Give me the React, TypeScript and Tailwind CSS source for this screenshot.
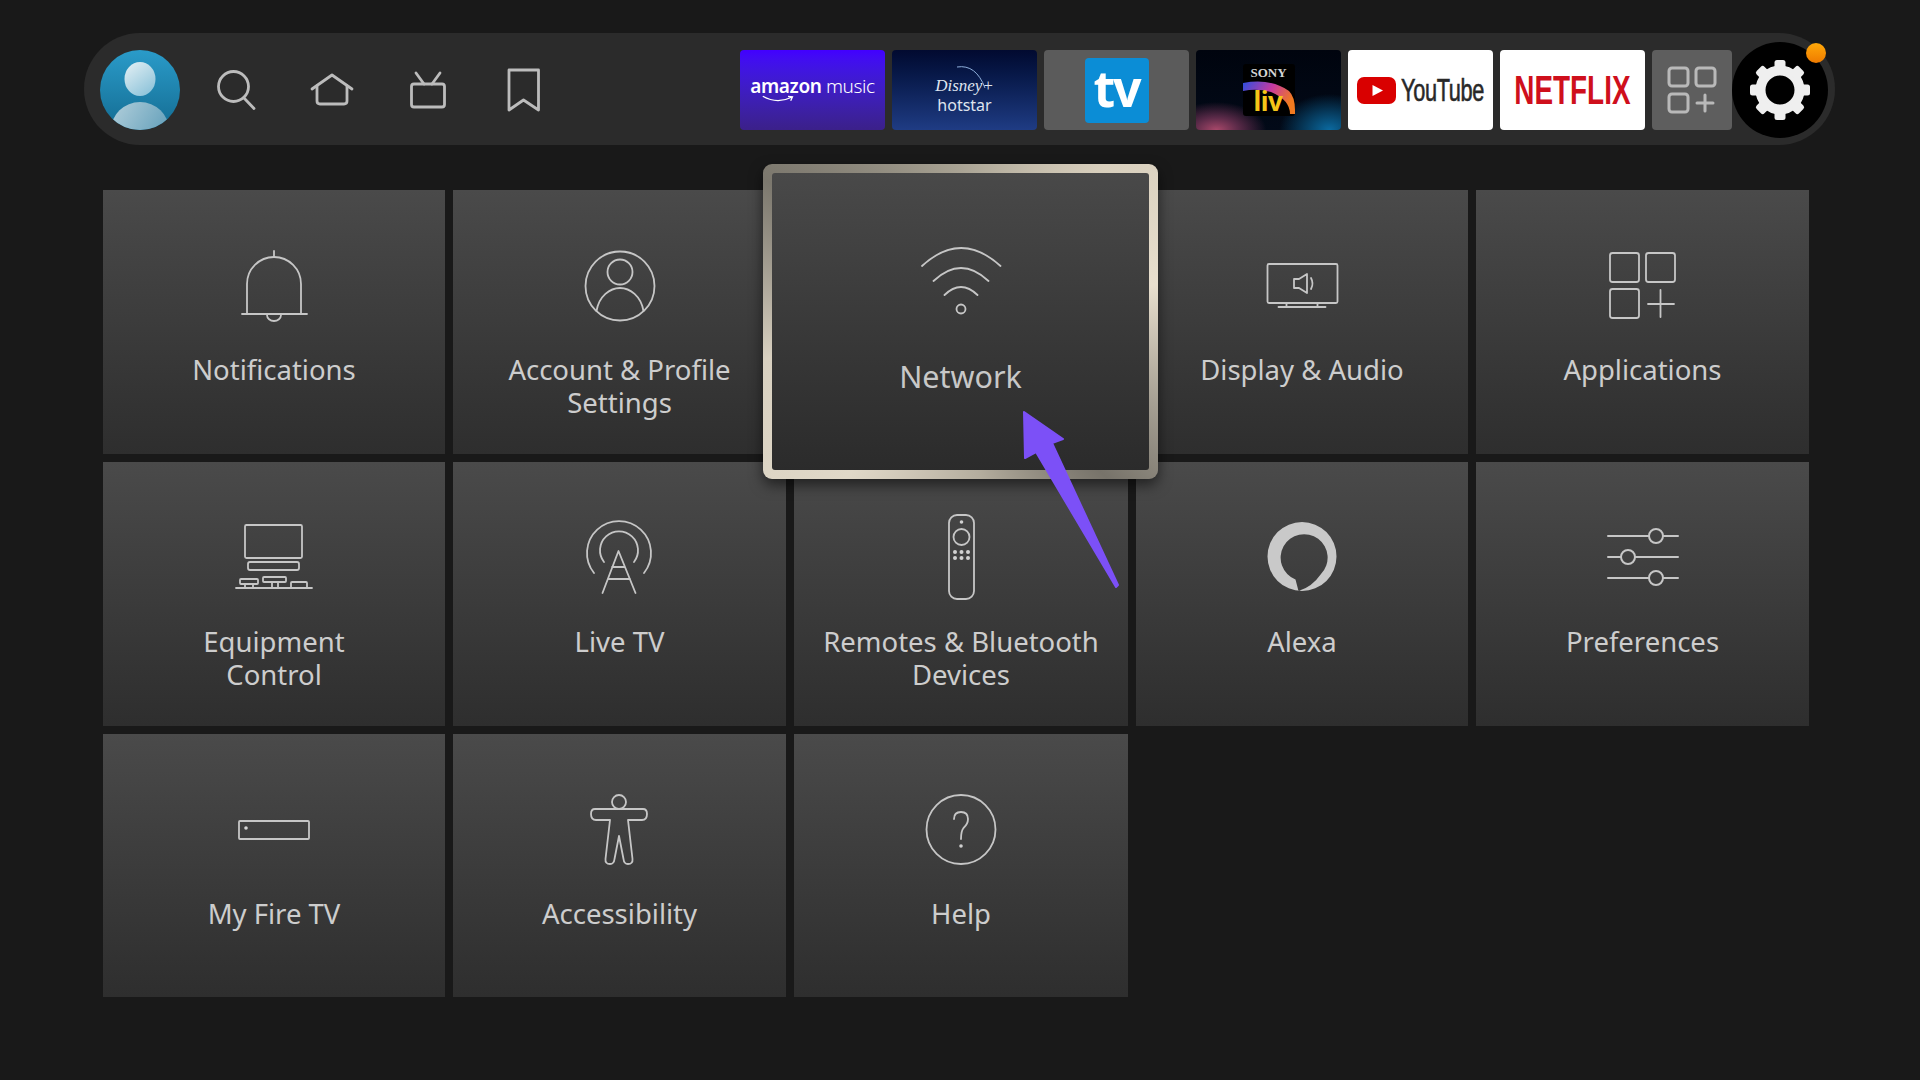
import type { ReactNode } from 'react';

const FONT = "font-['Noto_Sans','Open_Sans',sans-serif]";

function Line({ children, w = 1.8 }: { children: ReactNode; w?: number }) {
  return (
    <svg
      viewBox="0 0 90 90"
      fill="none"
      stroke="#c6c6c6"
      strokeWidth={w}
      strokeLinecap="round"
      strokeLinejoin="round"
      className="h-[90px] w-[90px] overflow-visible"
    >
      {children}
    </svg>
  );
}

const BellIcon = () => (
  <Line>
    <path d="M18 74V44a27 27 0 0 1 54 0V74" />
    <path d="M13 74H78M45 11V17M38 75a7 6 0 0 0 14 0" />
  </Line>
);

const PersonIcon = () => (
  <Line>
    <circle cx="45" cy="46" r="34.5" />
    <circle cx="45" cy="32" r="12.5" />
    <path d="M21.5 71C24 56 35 48 45 48S66 56 68.5 71" />
  </Line>
);

const WifiIcon = () => (
  <Line>
    <path d="M6 28Q45 -8 84.5 28M17.5 43Q45 17 72.5 43M28.5 57Q45 41 61.5 57" />
    <circle cx="45" cy="71" r="4.5" />
  </Line>
);

const DisplayIcon = () => (
  <Line>
    <rect x="10.5" y="24" width="70" height="39" rx="1.5" />
    <path d="M21.5 67H68.5M29.5 63V67M60.5 63V67" />
    <path d="M37 39H42L50 34V53L42 48H37ZM54 38Q57 43.5 54 49" />
  </Line>
);

const AppsIcon = () => (
  <Line>
    <rect x="12" y="13" width="29" height="29" rx="2.5" />
    <rect x="48" y="13" width="29" height="29" rx="2.5" />
    <rect x="12" y="49" width="29" height="29" rx="2.5" />
    <path d="M50 64H76M62.5 50V77" />
  </Line>
);

const EquipmentIcon = () => (
  <Line>
    <rect x="16" y="13" width="57" height="33" rx="1.5" />
    <rect x="19" y="50" width="51" height="8" rx="2" />
    <path d="M7 76H83M16 72V76M24 72V76M43 70V76M49 70V76" />
    <rect x="11" y="67" width="18" height="5" rx="1" />
    <rect x="34" y="65" width="23" height="5" rx="1" />
    <rect x="62" y="70" width="16" height="6" rx="1" />
  </Line>
);

const TowerIcon = () => (
  <Line>
    <path d="M19 61A32 32 0 1 1 69 61" />
    <path d="M29 50A19 19 0 1 1 59 50" />
    <path d="M27.5 81L43.5 39L60.5 81M37 55H50M33 67H55" />
  </Line>
);

const RemoteIcon = () => (
  <Line>
    <rect x="33" y="3" width="25" height="84" rx="8" />
    <circle cx="45.5" cy="25" r="8" />
    <g fill="#d0d0d0" stroke="none">
      <circle cx="45.5" cy="10" r="1.8" />
      <circle cx="39" cy="40" r="2" />
      <circle cx="45.5" cy="40" r="2" />
      <circle cx="52" cy="40" r="2" />
      <circle cx="39" cy="46" r="2" />
      <circle cx="45.5" cy="46" r="2" />
      <circle cx="52" cy="46" r="2" />
    </g>
  </Line>
);

const AlexaIcon = () => (
  <svg viewBox="0 0 90 90" className="h-[90px] w-[90px]">
    <path
      fill="#c9c9c9"
      fillRule="evenodd"
      d="M45 10a34.5 34.5 0 1 0 0 69a34.5 34.5 0 1 0 0-69ZM41.5 79L38.5 67.5A23.5 23.5 0 1 1 64 62Q55 75 41.5 79Z"
    />
  </svg>
);

const SlidersIcon = () => (
  <Line w={2}>
    <path d="M10 24H51M65 24H80M10 45H23M37 45H80M10 66H51M65 66H80" />
    <circle cx="58" cy="24" r="7" />
    <circle cx="30" cy="45" r="7" />
    <circle cx="58" cy="66" r="7" />
  </Line>
);

const BoxIcon = () => (
  <Line>
    <rect x="10" y="37" width="70" height="18" rx="1" />
    <circle cx="17" cy="44" r="1.8" fill="#d6d6d6" stroke="none" />
  </Line>
);

const BodyIcon = () => (
  <Line>
    <circle cx="44" cy="18" r="7" />
    <path d="M20 25H68Q72 25 72 30Q72 36 67 36H53L57.5 75Q58 80 53 80Q49 80 48.5 75L44 52L39.5 75Q39 80 35 80Q30 80 30.5 75L35 36H21Q16 36 16 30Q16 25 20 25Z" />
  </Line>
);

const HelpIcon = () => (
  <Line>
    <circle cx="45" cy="45.5" r="34.5" />
    <path d="M38 35Q38 28 45 28Q52 28 52 35Q52 40 47.5 44Q45 47 45 55" />
    <circle cx="45" cy="62" r="1.8" fill="#d0d0d0" stroke="none" />
  </Line>
);

const NavIcon = ({ children }: { children: ReactNode }) => (
  <div className="flex w-[96px] items-center justify-center">
    <svg
      viewBox="0 0 50 50"
      fill="none"
      stroke="#bcbcbc"
      strokeWidth="2.8"
      strokeLinecap="round"
      strokeLinejoin="round"
      className="h-[50px] w-[50px]"
    >
      {children}
    </svg>
  </div>
);

function Avatar() {
  return (
    <svg viewBox="0 0 80 80" className="h-[80px] w-[80px] shrink-0">
      <defs>
        <linearGradient id="avBg" x1="0" y1="0" x2="0" y2="1">
          <stop offset="0" stopColor="#2a9bc9" />
          <stop offset="1" stopColor="#146c92" />
        </linearGradient>
        <linearGradient id="avHead" x1="0" y1="0" x2="0.7" y2="1">
          <stop offset="0" stopColor="#e6f1f5" />
          <stop offset="1" stopColor="#8fc4da" />
        </linearGradient>
        <linearGradient id="avBody" x1="0" y1="0" x2="1" y2="0.6">
          <stop offset="0" stopColor="#b4d0dc" />
          <stop offset="1" stopColor="#5f9db8" />
        </linearGradient>
        <clipPath id="avClip">
          <circle cx="40" cy="40" r="40" />
        </clipPath>
      </defs>
      <circle cx="40" cy="40" r="40" fill="url(#avBg)" />
      <ellipse cx="40" cy="29" rx="15.5" ry="17" fill="url(#avHead)" />
      <ellipse cx="40" cy="80" rx="29" ry="28" fill="url(#avBody)" clipPath="url(#avClip)" />
    </svg>
  );
}

function AmazonTile() {
  return (
    <div className="relative flex h-[80px] w-[145px] items-center justify-center rounded bg-gradient-to-b from-[#4200ff] to-[#3b2089] text-white">
      <span className="-mt-[8px] text-[19px] leading-none tracking-[-0.4px]">
        <span className="font-semibold">amazon</span> <span className="font-light">music</span>
      </span>
      <svg viewBox="0 0 40 10" fill="none" stroke="#ffffff" strokeWidth="1.4" className="absolute left-[21px] top-[44px] h-[10px] w-[36px]">
        <path d="M2 2Q18 11 34 3M30 2L35 2.5L33 7" />
      </svg>
    </div>
  );
}

function HotstarTile() {
  return (
    <div className="relative flex h-[80px] w-[145px] flex-col items-center justify-center rounded bg-gradient-to-b from-[#020a30] to-[#1f3c84] text-[#dfe4ef]">
      <svg viewBox="0 0 50 30" fill="none" stroke="#8fb0dc" strokeWidth="1" className="absolute left-[62px] top-[14px] h-[30px] w-[50px]">
        <path d="M3 3Q22 0 31 24" />
      </svg>
      <span className="mt-[12px] font-['Liberation_Serif',serif] text-[17px] italic leading-[18px]">Disney+</span>
      <span className="text-[16px] leading-[20px]">hotstar</span>
    </div>
  );
}

function TvTile() {
  return (
    <div className="flex h-[80px] w-[145px] items-center justify-center rounded bg-[#5b5b5b]">
      <div className="flex h-[65px] w-[64px] items-center justify-center rounded bg-[#0b8dd6] pb-[4px] text-[50px] font-bold leading-none tracking-[-2px] text-white">
        tv
      </div>
    </div>
  );
}

function SonyTile() {
  return (
    <div className="flex h-[80px] w-[145px] items-center justify-center rounded bg-[radial-gradient(ellipse_50px_28px_at_14%_100%,#a8486a_0%,#5a2a48_45%,transparent_100%),radial-gradient(ellipse_50px_36px_at_92%_100%,#0b6aa0_0%,#063a5c_50%,transparent_100%),linear-gradient(#00040e,#020a18)]">
      <div className="relative h-[52px] w-[52px] rounded-[3px] bg-black">
        <svg viewBox="0 0 52 52" className="absolute inset-0 h-full w-full">
          <defs>
            <linearGradient id="livGrad" x1="0" y1="0" x2="1" y2="0.4">
              <stop offset="0" stopColor="#2d4fe0" />
              <stop offset="0.55" stopColor="#c83aa0" />
              <stop offset="1" stopColor="#f07a20" />
            </linearGradient>
          </defs>
          <path d="M0 19Q28 14 46 27Q52 33 52 46L52 50H47Q47 36 28 28Q14 24 0 27Z" fill="url(#livGrad)" />
        </svg>
        <span className="absolute left-0 right-0 top-[2px] text-center font-['Liberation_Serif',serif] text-[13px] font-bold leading-[14px] text-[#d6d6d6]">
          SONY
        </span>
        <span className="absolute bottom-0 left-[11px] text-[26px] font-bold leading-[30px] tracking-[-0.5px] text-[#f5c518]">
          liv
        </span>
      </div>
    </div>
  );
}

function YoutubeTile() {
  return (
    <div className="flex h-[80px] w-[145px] items-center gap-[5px] rounded bg-white pl-[9px]">
      <svg viewBox="0 0 39 27" className="h-[27px] w-[39px] shrink-0">
        <rect width="39" height="27" rx="7" fill="#d90000" />
        <path d="M15.5 8L26 13.5L15.5 19Z" fill="#ffffff" />
      </svg>
      <div className="w-[79px]">
        <span className="inline-block origin-left scale-x-[0.68] font-['Liberation_Sans',sans-serif] text-[32px] leading-none tracking-[-0.5px] text-[#282828] [-webkit-text-stroke:0.6px_#282828]">
          YouTube
        </span>
      </div>
    </div>
  );
}

function NetflixTile() {
  return (
    <div className="flex h-[80px] w-[145px] items-center justify-center rounded bg-white">
      <span className="inline-block scale-x-[0.68] font-['Liberation_Sans',sans-serif] text-[41px] font-bold leading-none text-[#cf0f1c]">
        NETFLIX
      </span>
    </div>
  );
}

function AddAppsTile() {
  return (
    <div className="h-[80px] w-[80px] rounded bg-[#5e5e5e]">
      <svg viewBox="0 0 80 80" fill="none" stroke="#b9b9b9" strokeWidth="3" strokeLinecap="round" className="h-[80px] w-[80px]">
        <rect x="17" y="18" width="19" height="18" rx="3" />
        <rect x="44" y="18" width="19" height="18" rx="3" />
        <rect x="17" y="44" width="19" height="18" rx="3" />
        <path d="M45 53H61M53 45V61" />
      </svg>
    </div>
  );
}

function GearButton() {
  const teeth = [0, 45, 90, 135, 180, 225, 270, 315];
  return (
    <div className="relative flex h-[96px] w-[96px] shrink-0 items-center justify-center rounded-full bg-black">
      <svg viewBox="0 0 64 64" className="h-[64px] w-[64px]">
        <circle cx="32" cy="32" r="19.5" fill="none" stroke="#efefef" strokeWidth="10" />
        {teeth.map((a) => (
          <rect key={a} x="26.5" y="2" width="11" height="12" rx="2.5" fill="#efefef" transform={`rotate(${a} 32 32)`} />
        ))}
      </svg>
      <span className="absolute right-[2px] top-[1px] h-[20px] w-[20px] rounded-full bg-gradient-to-b from-[#ffa90a] to-[#ee7a00]" />
    </div>
  );
}

function Tile({ icon, label }: { icon: ReactNode; label: string }) {
  return (
    <div className="flex flex-col items-center bg-gradient-to-b from-[#4a4a4a] to-[#2e2e2e] pt-[50px]">
      <div className="flex h-[90px] w-[90px] items-center justify-center">{icon}</div>
      <p className="mt-[23px] whitespace-pre-line text-center text-[27.5px] leading-[33px] text-[#cdcdcd]">{label}</p>
    </div>
  );
}

function NetworkTile() {
  return (
    <div className="relative bg-[#3a3a3a]">
      <div className="absolute -bottom-[25px] -left-[31px] -right-[30px] -top-[26px] z-10 rounded-[9px] bg-[conic-gradient(from_0deg,#a9a394,#d8cfbd_12%,#e8dfce_22%,#77736a_38%,#b4ad9e_48%,#e0d8c8_60%,#d8d0c0_72%,#7c786e_85%,#a9a394)] p-[9px] shadow-[0_6px_14px_rgba(0,0,0,0.55)]">
        <div className="flex h-full flex-col items-center rounded-[3px] bg-gradient-to-b from-[#494949] to-[#2b2b2b] pt-[65px]">
          <WifiIcon />
          <p className="mt-[30px] text-[30.5px] leading-[36px] text-[#c8c8c8]">Network</p>
        </div>
      </div>
      <svg viewBox="0 0 104 184" className="absolute left-[226px] top-[218px] z-20 h-[184px] w-[104px]">
        <path
          d="M4 4L43 31L32 35L98 177L96 179L16 44L5 50Z"
          fill="#7c50f7"
          stroke="#7c50f7"
          strokeWidth="2"
          strokeLinejoin="round"
        />
      </svg>
    </div>
  );
}

export default function App() {
  return (
    <div className={`h-[1080px] w-[1920px] overflow-hidden bg-[#191919] pt-[33px] ${FONT}`}>
      <header className="ml-[84px] flex h-[112px] w-[1751px] items-center rounded-full bg-[#2b2b2b] pl-[16px] pr-[7px] pt-[2px]">
        <Avatar />
        <nav className="ml-[8px] flex">
          <NavIcon>
            <circle cx="22.5" cy="21.5" r="15" />
            <path d="M33 33L43 43.5" />
          </NavIcon>
          <NavIcon>
            <path d="M5 24L25 10L45 24" />
            <path d="M10 21V36Q10 39 13 39H37Q40 39 40 36V21" />
          </NavIcon>
          <NavIcon>
            <rect x="8.5" y="19" width="33" height="23" rx="2.5" />
            <path d="M13 8L21 19M37 8L29 19" />
          </NavIcon>
          <NavIcon>
            <path d="M10 5H39.5V45L24.5 35L10 45Z" />
          </NavIcon>
        </nav>
        <div className="ml-auto flex items-center gap-[7px]">
          <AmazonTile />
          <HotstarTile />
          <TvTile />
          <SonyTile />
          <YoutubeTile />
          <NetflixTile />
          <AddAppsTile />
        </div>
        <GearButton />
      </header>

      <main className="ml-[103px] mt-[45px] grid w-[1706px] grid-cols-[342px_333px_334px_332px_333px] grid-rows-[264px_264px_263px] gap-[8px]">
        <Tile icon={<BellIcon />} label="Notifications" />
        <Tile icon={<PersonIcon />} label={'Account & Profile\nSettings'} />
        <NetworkTile />
        <Tile icon={<DisplayIcon />} label="Display & Audio" />
        <Tile icon={<AppsIcon />} label="Applications" />
        <Tile icon={<EquipmentIcon />} label={'Equipment\nControl'} />
        <Tile icon={<TowerIcon />} label="Live TV" />
        <Tile icon={<RemoteIcon />} label={'Remotes & Bluetooth\nDevices'} />
        <Tile icon={<AlexaIcon />} label="Alexa" />
        <Tile icon={<SlidersIcon />} label="Preferences" />
        <Tile icon={<BoxIcon />} label="My Fire TV" />
        <Tile icon={<BodyIcon />} label="Accessibility" />
        <Tile icon={<HelpIcon />} label="Help" />
      </main>
    </div>
  );
}
